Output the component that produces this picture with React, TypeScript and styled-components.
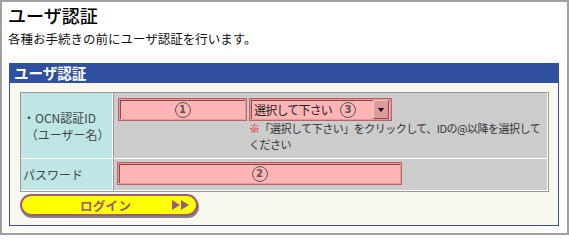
import React from 'react';
import styled, { createGlobalStyle } from 'styled-components';

const GlobalStyle = createGlobalStyle`
  html, body {
    margin: 0;
    padding: 0;
    background: #fff;
  }
  body {
    font-family: "Noto Sans CJK JP", "Noto Sans", sans-serif;
    color: #222;
  }
`;

const Page = styled.div`
  width: 569px;
  height: 235px;
  box-sizing: border-box;
  border: 2px solid #a0a0a0;
  padding: 2px 8px 0 6px;
  background: #fff;
`;

const Title = styled.h1`
  margin: 0;
  font-size: 18px;
  line-height: 22px;
  font-weight: 500;
  color: #000;
`;

const Lead = styled.p`
  margin: 5px 0 0;
  font-size: 12.5px;
  line-height: 16px;
  color: #111;
`;

const Panel = styled.section`
  margin: 16px 0 0 1px;
  width: 550px;
`;

const PanelHead = styled.div`
  height: 20px;
  background: #2f509f;
  color: #fff;
  font-size: 14.5px;
  font-weight: 700;
  line-height: 20px;
  padding-left: 5px;
`;

const PanelBody = styled.div`
  background: #f8f8ee;
  border: 1px solid #2f509f;
  border-top: none;
  padding: 9px 9px 9px 10px;
`;

const Table = styled.table`
  width: 529px;
  border-collapse: separate;
  border-spacing: 0;
  border: 1px solid #999;
  table-layout: fixed;
`;

const Row = styled.tr<{ $h: number }>`
  height: ${p => p.$h}px;

  & + & > td {
    border-top: 1px solid #999;
  }
`;

const Label = styled.td`
  box-sizing: border-box;
  width: 92px;
  background: #bee6e6;
  border-right: 1px solid #fff;
  border-bottom: 1px solid #fff;
  padding: 0 0 0 2px;
  vertical-align: middle;
  font-size: 12px;
  line-height: 17px;
  color: #444;
`;

const Value = styled.td<{ $pad: string }>`
  box-sizing: border-box;
  background: #cccccc;
  border-left: 1px solid #999;
  border-right: 1px solid #fff;
  border-bottom: 1px solid #fff;
  padding: ${p => p.$pad};
  vertical-align: top;
`;

const IdLine = styled.div`
  display: flex;
  align-items: flex-start;
  gap: 2px;
`;

const Field = styled.div<{ $w: number }>`
  box-sizing: border-box;
  flex: none;
  width: ${p => p.$w}px;
  height: 23px;
  background: #ffb5b5;
  border: 1px solid #b86464;
  box-shadow: inset 0 0 0 1px #e49898, inset 2px 2px 0 #8c4848;
  display: flex;
  align-items: center;
  justify-content: center;
`;

const Num = styled.span`
  box-sizing: border-box;
  flex: none;
  width: 16px;
  height: 16px;
  border: 1.6px solid #555;
  border-radius: 50%;
  display: inline-flex;
  align-items: center;
  justify-content: center;
  font-family: "DejaVu Sans", sans-serif;
  font-size: 10px;
  font-weight: 700;
  color: #555;
  line-height: 1;
  letter-spacing: 0;
`;

const SelectCol = styled.div`
  flex: none;
  display: flex;
  flex-direction: column;
`;

const Select = styled.div`
  box-sizing: border-box;
  width: 143px;
  height: 23px;
  background: #ffb5b5;
  border: 1px solid #b86464;
  box-shadow: inset 0 0 0 1px #e49898, inset 2px 2px 0 #8c4848;
  padding: 1px 2px 1px 4px;
  display: flex;
  align-items: center;
`;

const SelectText = styled.span`
  flex: 1;
  display: flex;
  align-items: center;
  gap: 8px;
  font-size: 12px;
  letter-spacing: -0.8px;
  color: #222;
  white-space: nowrap;
`;

const DropButton = styled.span`
  box-sizing: border-box;
  width: 16px;
  height: 19px;
  background: #dc9a9a;
  border: 1px solid;
  border-color: #f2c4c4 #8c4848 #8c4848 #f2c4c4;
  display: flex;
  align-items: center;
  justify-content: center;

  &::after {
    content: '';
    border-left: 3.5px solid transparent;
    border-right: 3.5px solid transparent;
    border-top: 4px solid #000;
  }
`;

const Note = styled.div`
  margin-top: -1px;
  font-size: 11px;
  line-height: 16px;
  letter-spacing: -0.5px;
  color: #333;
  white-space: nowrap;
`;

const Mark = styled.span`
  color: #ff0000;
`;

const LoginButton = styled.button`
  box-sizing: border-box;
  margin-top: 2px;
  width: 178px;
  height: 22px;
  background: #ffff00;
  border: 2px solid #9a6072;
  border-radius: 11px;
  box-shadow: 1px 2px 0 #8e8088;
  padding: 0 6px 0 58px;
  display: flex;
  align-items: center;
  font-family: "Noto Sans CJK JP", sans-serif;
  font-size: 12.5px;
  font-weight: 700;
  color: #9b5b7b;
  letter-spacing: 0.3px;
  cursor: pointer;
`;

const Arrows = styled.svg`
  margin-left: auto;
`;

export default function App() {
  return (
    <>
      <GlobalStyle />
      <Page>
        <Title>ユーザ認証</Title>
        <Lead>各種お手続きの前にユーザ認証を行います。</Lead>
        <Panel>
          <PanelHead>ユーザ認証</PanelHead>
          <PanelBody>
            <Table>
              <tbody>
                <Row $h={66}>
                  <Label>
                    ・OCN認証ID
                    <br />
                    &nbsp;（ユーザー名）
                  </Label>
                  <Value $pad="5px 4px 0 4px">
                    <IdLine>
                      <Field $w={129}>
                        <Num>1</Num>
                      </Field>
                      <SelectCol>
                        <Select>
                          <SelectText>
                            選択して下さい
                            <Num>3</Num>
                          </SelectText>
                          <DropButton />
                        </Select>
                        <Note>
                          <Mark>※</Mark>「選択して下さい」をクリックして、IDの@以降を選択して
                          <br />
                          ください
                        </Note>
                      </SelectCol>
                    </IdLine>
                  </Value>
                </Row>
                <Row $h={32}>
                  <Label>パスワード</Label>
                  <Value $pad="3px 3px 0 3px">
                    <Field $w={285}>
                      <Num>2</Num>
                    </Field>
                  </Value>
                </Row>
              </tbody>
            </Table>
            <LoginButton type="button">
              ログイン
              <Arrows width="18" height="10" viewBox="0 0 18 10">
                <path d="M0 0 L8 5 L0 10 Z M9 0 L17 5 L9 10 Z" fill="#9b5b7b" />
              </Arrows>
            </LoginButton>
          </PanelBody>
        </Panel>
      </Page>
    </>
  );
}
